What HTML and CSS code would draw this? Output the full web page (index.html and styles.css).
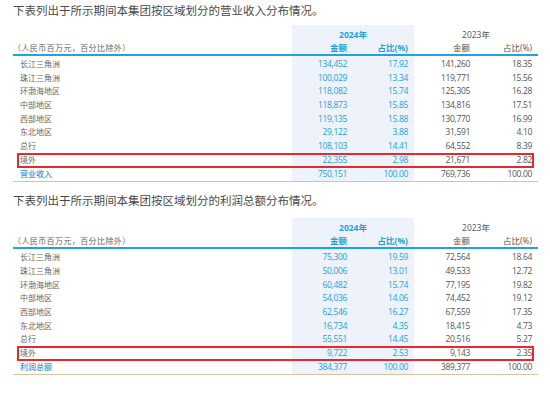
FILE: index.html
```html
<!DOCTYPE html>
<html lang="zh-CN">
<head>
<meta charset="utf-8">
<title>区域分布</title>
<link rel="stylesheet" href="styles.css">
</head>
<body>
<div class="page">
  <section class="sec">
    <h2 class="title">下表列出于所示期间本集团按区域划分的营业收入分布情况。</h2>
    <div class="thead">
      <div class="h-year hl cur">2024年</div>
      <div class="h-year prev">2023年</div>
      <div class="h-unit">（人民币百万元，百分比除外）</div>
      <div class="h-col hl cur">金额</div>
      <div class="h-col hl cur">占比(%)</div>
      <div class="h-col prev">金额</div>
      <div class="h-col prev">占比(%)</div>
    </div>
    <div class="tbody">
      <div class="row"><span class="lab">长江三角洲</span><span class="n hl cur">134,452</span><span class="n hl cur">17.92</span><span class="n">141,260</span><span class="n">18.35</span></div>
      <div class="row"><span class="lab">珠江三角洲</span><span class="n hl cur">100,029</span><span class="n hl cur">13.34</span><span class="n">119,771</span><span class="n">15.56</span></div>
      <div class="row"><span class="lab">环渤海地区</span><span class="n hl cur">118,082</span><span class="n hl cur">15.74</span><span class="n">125,305</span><span class="n">16.28</span></div>
      <div class="row"><span class="lab">中部地区</span><span class="n hl cur">118,873</span><span class="n hl cur">15.85</span><span class="n">134,816</span><span class="n">17.51</span></div>
      <div class="row"><span class="lab">西部地区</span><span class="n hl cur">119,135</span><span class="n hl cur">15.88</span><span class="n">130,770</span><span class="n">16.99</span></div>
      <div class="row"><span class="lab">东北地区</span><span class="n hl cur">29,122</span><span class="n hl cur">3.88</span><span class="n">31,591</span><span class="n">4.10</span></div>
      <div class="row"><span class="lab">总行</span><span class="n hl cur">108,103</span><span class="n hl cur">14.41</span><span class="n">64,552</span><span class="n">8.39</span></div>
      <div class="row flag"><span class="lab">境外</span><span class="n hl cur">22,355</span><span class="n hl cur">2.98</span><span class="n">21,671</span><span class="n">2.82</span></div>
      <div class="row total"><span class="lab">营业收入</span><span class="n hl cur">750,151</span><span class="n hl cur">100.00</span><span class="n">769,736</span><span class="n">100.00</span></div>
    </div>
  </section>

  <section class="sec sec-2">
    <h2 class="title">下表列出于所示期间本集团按区域划分的利润总额分布情况。</h2>
    <div class="thead">
      <div class="h-year hl cur">2024年</div>
      <div class="h-year prev">2023年</div>
      <div class="h-unit">（人民币百万元，百分比除外）</div>
      <div class="h-col hl cur">金额</div>
      <div class="h-col hl cur">占比(%)</div>
      <div class="h-col prev">金额</div>
      <div class="h-col prev">占比(%)</div>
    </div>
    <div class="tbody">
      <div class="row"><span class="lab">长江三角洲</span><span class="n hl cur">75,300</span><span class="n hl cur">19.59</span><span class="n">72,564</span><span class="n">18.64</span></div>
      <div class="row"><span class="lab">珠江三角洲</span><span class="n hl cur">50,006</span><span class="n hl cur">13.01</span><span class="n">49,533</span><span class="n">12.72</span></div>
      <div class="row"><span class="lab">环渤海地区</span><span class="n hl cur">60,482</span><span class="n hl cur">15.74</span><span class="n">77,195</span><span class="n">19.82</span></div>
      <div class="row"><span class="lab">中部地区</span><span class="n hl cur">54,036</span><span class="n hl cur">14.06</span><span class="n">74,452</span><span class="n">19.12</span></div>
      <div class="row"><span class="lab">西部地区</span><span class="n hl cur">62,546</span><span class="n hl cur">16.27</span><span class="n">67,559</span><span class="n">17.35</span></div>
      <div class="row"><span class="lab">东北地区</span><span class="n hl cur">16,734</span><span class="n hl cur">4.35</span><span class="n">18,415</span><span class="n">4.73</span></div>
      <div class="row"><span class="lab">总行</span><span class="n hl cur">55,551</span><span class="n hl cur">14.45</span><span class="n">20,516</span><span class="n">5.27</span></div>
      <div class="row flag"><span class="lab">境外</span><span class="n hl cur">9,722</span><span class="n hl cur">2.53</span><span class="n">9,143</span><span class="n">2.35</span></div>
      <div class="row total"><span class="lab">利润总额</span><span class="n hl cur">384,377</span><span class="n hl cur">100.00</span><span class="n">389,377</span><span class="n">100.00</span></div>
    </div>
  </section>
</div>
</body>
</html>
```

FILE: styles.css
```css
* { box-sizing: border-box; margin: 0; padding: 0; }

html, body {
  background: #ffffff;
}

body {
  margin: 0;
  font-family: "Noto Sans CJK SC", "Noto Sans", sans-serif;
  color: #555555;
}

.page {
  width: 525px;
  margin-left: 13px;
}

.sec-2 {
  margin-top: 8px;
}

.title {
  font-size: 11.5px;
  font-weight: normal;
  color: #4a4a4a;
  height: 20px;
  line-height: 20px;
  margin-bottom: 5px;
  white-space: nowrap;
}

.sec-2 .title {
  margin-bottom: 8px;
}

.thead {
  display: grid;
  grid-template-columns: 279px 58px 64px 62px 62px;
  grid-template-rows: 17px 12px;
  border-bottom: 2px solid #1ea4e2;
}

.hl {
  background: #eef3fb;
}

.h-year {
  font-family: "Open Sans", "Noto Sans CJK SC", sans-serif;
  font-size: 8.5px;
  line-height: 17px;
  text-align: center;
  padding-top: 1px;
}

.h-year.cur {
  grid-column: 2 / 4;
  grid-row: 1;
  color: #1fa0dc;
  font-weight: bold;
}

.h-year.prev {
  grid-column: 4 / 6;
  grid-row: 1;
  color: #555555;
}

.h-unit {
  grid-column: 1;
  grid-row: 2;
  font-size: 8px;
  letter-spacing: 0.4px;
  line-height: 12px;
  color: #666666;
  white-space: nowrap;
}

.h-col {
  grid-row: 2;
  font-family: "Open Sans", "Noto Sans CJK SC", sans-serif;
  font-size: 8.5px;
  line-height: 12px;
  text-align: right;
  padding-right: 6px;
}

.h-col.cur {
  color: #1fa0dc;
  font-weight: bold;
}

.h-col.prev {
  color: #555555;
}

.thead .h-col:nth-of-type(4) { padding-right: 3px; }

.tbody {
  padding-top: 1px;
  padding-bottom: 1px;
  border-bottom: 1px solid #d9c39d;
  background: linear-gradient(to right, transparent 279px, #eef3fb 279px, #eef3fb 401px, transparent 401px);
}

.row {
  display: grid;
  grid-template-columns: 279px 58px 64px 62px 62px;
  height: 13.7px;
  line-height: 13.7px;
}

.row .hl {
  background: transparent;
}

.lab {
  padding-left: 7px;
  font-size: 8px;
  color: #666666;
  white-space: nowrap;
}

.n {
  font-family: "Open Sans", sans-serif;
  font-size: 8.5px;
  letter-spacing: -0.35px;
  text-align: right;
  padding-right: 6px;
  color: #555555;
}

.n.cur {
  color: #1fa0dc;
}

.row .n:nth-child(2) {
  padding-right: 3px;
}

.row.total .lab {
  color: #1fa0dc;
  font-weight: 500;
}

.flag {
  position: relative;
}

.flag::after {
  content: "";
  position: absolute;
  left: 4px;
  right: 4px;
  top: 0;
  bottom: -1px;
  border: 2px solid #e8292c;
  pointer-events: none;
}
```
